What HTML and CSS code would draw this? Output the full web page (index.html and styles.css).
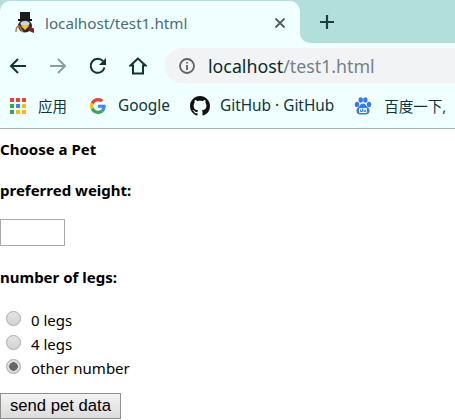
FILE: index.html
```html
<!DOCTYPE html>
<html lang="zh-CN">
<head>
    <meta charset="UTF-8">
    <title>localhost/test1.html</title>
    <link rel="stylesheet" href="styles.css">
</head>
<body>
    <div class="tabstrip">
        <div class="tab">
            <svg class="favicon" width="20" height="21" viewBox="0 0 20 21">
                <path d="M5 0h10v8H5z" fill="#1c1c1c"/>
                <rect x="3" y="7" width="14" height="2" fill="#111"/>
                <ellipse cx="10" cy="14" rx="7" ry="6.500" fill="#2a2a2a"/>
                <ellipse cx="10" cy="11.500" rx="4.500" ry="2.500" fill="#d4d4d4"/>
                <path d="M5.500 13.500h9L10 18z" fill="#f7cb15"/>
                <path d="M14 15l5 1.500V21l-5-2z" fill="#8a1c1c"/>
                <path d="M1 20c0-3 1-6 3-6l4 6" fill="none" stroke="#b5714a" stroke-width="1.400"/>
            </svg>
            <span class="tab-title">localhost/test1.html</span>
            <svg class="tab-close" width="12" height="12" viewBox="0 0 12 12">
                <path d="M1.500 1.500l9 9M10.500 1.500l-9 9" stroke="#4a6263" stroke-width="1.800"/>
            </svg>
        </div>
        <div class="tab-rest">
            <svg class="new-tab" width="16" height="16" viewBox="0 0 16 16">
                <path d="M8 1v14M1 8h14" stroke="#17403f" stroke-width="2.200"/>
            </svg>
        </div>
    </div>

    <div class="toolbar">
        <svg class="nav-icon" width="18" height="18" viewBox="0 0 18 18">
            <path d="M17 9H2M9 2L2 9l7 7" fill="none" stroke="#0f3433" stroke-width="2"/>
        </svg>
        <svg class="nav-icon" width="18" height="18" viewBox="0 0 18 18">
            <path d="M1 9h15M9 2l7 7-7 7" fill="none" stroke="#8aa0a0" stroke-width="2"/>
        </svg>
        <svg class="nav-icon" width="18" height="18" viewBox="0 0 18 18">
            <path d="M15.500 10.500A7 7 0 1 1 14 4.200" fill="none" stroke="#0f3433" stroke-width="2"/>
            <path d="M17 1v7h-7z" fill="#0f3433"/>
        </svg>
        <svg class="nav-icon" width="18" height="18" viewBox="0 0 18 18">
            <path d="M9 1.500L1.500 8.500H4v8h10v-8h2.500z" fill="none" stroke="#0f3433" stroke-width="2"/>
        </svg>
        <div class="omnibox">
            <svg width="18" height="18" viewBox="0 0 18 18">
                <circle cx="9" cy="9" r="7" fill="none" stroke="#5f6368" stroke-width="1.800"/>
                <path d="M9 8v5M9 5v1.600" stroke="#5f6368" stroke-width="1.800"/>
            </svg>
            <span class="url">localhost<span class="url-path">/test1.html</span></span>
        </div>
    </div>

    <div class="bookmarks">
        <span class="bookmark bookmark-apps">
            <svg width="16" height="16" viewBox="0 0 16 16">
                <rect x="0" y="0" width="4" height="4" fill="#ea4335"/>
                <rect x="6" y="0" width="4" height="4" fill="#ea4335"/>
                <rect x="12" y="0" width="4" height="4" fill="#ea4335"/>
                <rect x="0" y="6" width="4" height="4" fill="#34a853"/>
                <rect x="6" y="6" width="4" height="4" fill="#4285f4"/>
                <rect x="12" y="6" width="4" height="4" fill="#fbbc05"/>
                <rect x="0" y="12" width="4" height="4" fill="#34a853"/>
                <rect x="6" y="12" width="4" height="4" fill="#fbbc05"/>
                <rect x="12" y="12" width="4" height="4" fill="#fbbc05"/>
            </svg>
            <span class="cjk">应用</span>
        </span>
        <span class="bookmark">
            <svg width="16" height="16" viewBox="0 0 48 48">
                <path fill="#ea4335" d="M24 9.500c3.500 0 6.700 1.200 9.200 3.600l6.900-6.900C35.900 2.400 30.500 0 24 0 14.600 0 6.500 5.400 2.600 13.200l8 6.200C12.500 13.700 17.800 9.500 24 9.500z"/>
                <path fill="#4285f4" d="M47 24.500c0-1.600-.1-3.100-.4-4.500H24v9h12.900c-.6 3-2.200 5.500-4.700 7.200l7.700 6C44.400 37.600 47 31.600 47 24.500z"/>
                <path fill="#fbbc05" d="M10.600 28.600c-.5-1.400-.8-3-.8-4.600s.3-3.200.8-4.600l-8-6.200C.9 16.500 0 20.100 0 24s.9 7.500 2.600 10.800z"/>
                <path fill="#34a853" d="M24 48c6.500 0 11.900-2.100 15.900-5.800l-7.700-6c-2.200 1.400-4.900 2.300-8.200 2.300-6.200 0-11.500-4.200-13.400-9.900l-8 6.200C6.500 42.600 14.600 48 24 48z"/>
            </svg>
            Google
        </span>
        <span class="bookmark bookmark-wide">
            <svg width="20" height="20" viewBox="0 0 16 16">
                <path fill="#111" d="M8 0C3.580 0 0 3.580 0 8c0 3.540 2.290 6.530 5.470 7.590.4.070.55-.17.55-.38 0-.19-.01-.82-.01-1.490-2.010.37-2.530-.49-2.690-.94-.09-.23-.48-.94-.82-1.130-.28-.15-.68-.52-.01-.53.63-.01 1.080.58 1.230.82.720 1.210 1.870.87 2.330.66.070-.52.280-.87.510-1.070-1.780-.2-3.640-.89-3.640-3.950 0-.87.310-1.590.820-2.150-.08-.2-.36-1.020.08-2.120 0 0 .670-.21 2.200.82.640-.18 1.320-.27 2-.27s1.360.09 2 .27c1.530-1.040 2.200-.82 2.200-.82.440 1.100.160 1.920.080 2.120.510.560.820 1.270.820 2.150 0 3.070-1.870 3.750-3.650 3.950.29.250.54.730.54 1.480 0 1.070-.01 1.930-.01 2.200 0 .210.150.460.550.380A8.010 8.010 0 0 0 16 8c0-4.420-3.580-8-8-8z"/>
            </svg>
            GitHub · GitHub
        </span>
        <span class="bookmark">
            <svg width="18" height="18" viewBox="0 0 18 18">
                <rect width="18" height="18" fill="#fff"/>
                <ellipse cx="3" cy="7.500" rx="2.200" ry="2.800" fill="#2f7bf0"/>
                <ellipse cx="6.700" cy="3" rx="2.200" ry="2.800" fill="#2f7bf0"/>
                <ellipse cx="11.300" cy="3" rx="2.200" ry="2.800" fill="#2f7bf0"/>
                <ellipse cx="15" cy="7.500" rx="2.200" ry="2.800" fill="#2f7bf0"/>
                <path d="M9 6.500c-2.800 0-3.300 3-5.500 4.500C1.500 13 2.500 17.500 6 17.500h6c3.500 0 4.500-4.500 2.500-6.500C12.300 9.500 11.800 6.500 9 6.500z" fill="#2f7bf0"/>
                <rect x="5" y="11" width="8" height="5" rx="1" fill="#fff"/>
                <path d="M6.500 12.500v2h2v-3M10 12.500v2h1.700v-2" fill="none" stroke="#2f7bf0"/>
            </svg>
            <span class="cjk">百度一下,</span>
        </span>
    </div>

    <form class="pet-form">
        <p class="label">Choose a Pet</p>
        <p class="label">preferred weight:</p>
        <input class="weight" type="text">
        <p class="label">number of legs:</p>
        <div class="legs">
            <label class="leg"><input type="radio" name="legs"> 0 legs</label>
            <label class="leg"><input type="radio" name="legs"> 4 legs</label>
            <label class="leg"><input type="radio" name="legs" checked> other number</label>
        </div>
        <button class="send" type="button">send pet data</button>
    </form>
</body>
</html>
```

FILE: styles.css
```css
html, body {
    margin: 0;
    padding: 0;
    background-color: #ffffff;
    overflow: hidden;
}
body {
    width: 455px;
    height: 420px;
    font-family: "Noto Sans", "Noto Sans CJK SC", sans-serif;
    color: #000;
}
.tabstrip {
    display: flex;
    box-sizing: border-box;
    height: 43px;
    padding-top: 1px;
    background: linear-gradient(#b2dfdc 50%, #f0ffff 50%);
}
.tab {
    display: flex;
    align-items: center;
    box-sizing: border-box;
    width: 300px;
    padding: 1px 14px 0 15px;
    background-color: #f0ffff;
    border-radius: 10px 10px 0 0;
}
.favicon {
    flex: none;
}
.tab-title {
    flex: 1;
    margin-left: 10px;
    font-size: 15.200px;
    color: #4a6b78;
}
.tab-rest {
    display: flex;
    align-items: center;
    flex: 1;
    padding-left: 19px;
    background-color: #b2dfdc;
    border-bottom-left-radius: 10px;
}
.toolbar {
    display: flex;
    align-items: center;
    box-sizing: border-box;
    height: 40px;
    padding: 5px 0 0 9px;
    background-color: #f0ffff;
}
.nav-icon {
    flex: none;
    margin-right: 22px;
}
.omnibox {
    display: flex;
    align-items: center;
    flex: 1;
    height: 35px;
    margin-left: -4px;
    padding-left: 13px;
    background-color: #f2f3f5;
    border-radius: 18px 0 0 18px;
}
.url {
    margin-left: 12px;
    font-size: 17.800px;
    color: #0b2a2a;
}
.url-path {
    color: #73808a;
}
.bookmarks {
    display: flex;
    align-items: center;
    gap: 20px;
    box-sizing: border-box;
    height: 46px;
    padding-left: 10px;
    background-color: #f0ffff;
    border-bottom: 1px solid #a9b4b4;
    white-space: nowrap;
    overflow: hidden;
    font-size: 15.400px;
    color: #0b3540;
}
.bookmark {
    display: flex;
    align-items: center;
    gap: 12px;
}
.bookmark-apps {
    margin-right: 3px;
}
.bookmark-wide {
    gap: 10px;
}
.cjk {
    font-size: 14.500px;
}
.pet-form {
    display: block;
    padding-top: 11px;
}
.label {
    margin: 22px 0 0;
    font-size: 15px;
    font-weight: 700;
    line-height: 19px;
}
.label:first-child {
    margin-top: 0;
}
.weight {
    display: block;
    box-sizing: border-box;
    width: 65px;
    height: 27px;
    margin: 19px 0 0;
    padding: 0;
    border: 1px solid #a9a9a9;
}
.legs {
    margin-top: 21px;
}
.leg {
    display: flex;
    align-items: center;
    height: 24px;
    font-size: 15px;
    gap: 10px;
}
.leg input {
    appearance: none;
    width: 15px;
    height: 15px;
    margin: -3px 0 0 6px;
    border: 1px solid #a8a8a8;
    border-radius: 50%;
    background: linear-gradient(#e4e4e4, #d2d2d2);
}
.leg input:checked {
    background: radial-gradient(circle, #666 0 4px, #dcdcdc 4.500px);
}
.send {
    display: block;
    box-sizing: border-box;
    width: 121px;
    height: 26px;
    margin: 13px 0 0;
    padding: 0;
    font-family: "Liberation Sans", sans-serif;
    font-size: 16.670px;
    color: #000;
    border: 1px solid #8f8f8f;
    background: linear-gradient(#f3f3f3, #dcdcdc);
}
```
